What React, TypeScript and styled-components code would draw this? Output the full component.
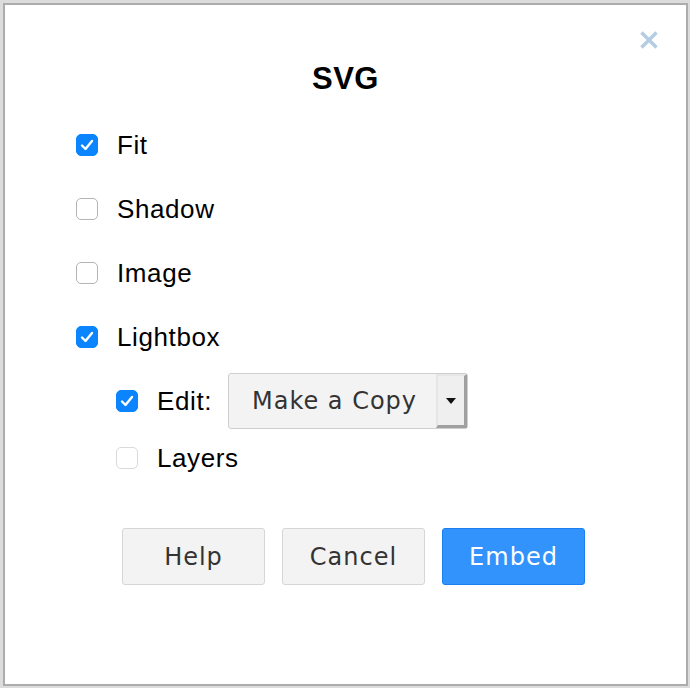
import React from "react";
import styled, { createGlobalStyle } from "styled-components";

const GlobalStyle = createGlobalStyle`
  html, body {
    margin: 0;
    padding: 0;
    background: #dcdcdc;
    font-family: "Liberation Sans", Arial, sans-serif;
  }
`;

const Dialog = styled.div`
  position: relative;
  box-sizing: border-box;
  margin: 3px 0 0 3px;
  width: 685px;
  height: 683px;
  background: #fff;
  border: 2px solid #acacac;
`;

const CloseButton = styled.button`
  position: absolute;
  top: 23px;
  right: 25px;
  width: 24px;
  height: 24px;
  padding: 0;
  border: none;
  background: transparent;
  cursor: pointer;
`;

const Title = styled.h2`
  margin: 0;
  padding-top: 55px;
  height: 38px;
  line-height: 38px;
  text-align: center;
  font-size: 31px;
  font-weight: bold;
  color: #000;
  letter-spacing: 0.5px;
`;

const Options = styled.div`
  display: flex;
  flex-direction: column;
  padding: 15px 0 0 71px;
`;

const Row = styled.label<{ $indent?: boolean; $height?: number }>`
  display: flex;
  align-items: center;
  height: ${(p) => p.$height ?? 64}px;
  margin-left: ${(p) => (p.$indent ? 40 : 0)}px;
  font-size: 26px;
  letter-spacing: 0.6px;
  color: #000;
  cursor: pointer;
`;

const Box = styled.span<{ $checked?: boolean; $disabled?: boolean }>`
  box-sizing: border-box;
  display: inline-flex;
  align-items: center;
  justify-content: center;
  width: 22px;
  height: 22px;
  margin-right: 19px;
  border-radius: 5px;
  background: ${(p) => (p.$checked ? "#0a84ff" : "#fff")};
  border: 1px solid
    ${(p) => (p.$checked ? "#0a84ff" : p.$disabled ? "#dadada" : "#b4b4b4")};
`;

const Select = styled.div`
  box-sizing: border-box;
  display: flex;
  align-items: stretch;
  width: 240px;
  height: 56px;
  margin-left: 16px;
  background: #f3f3f3;
  border: 1px solid #cfcfcf;
  border-radius: 3px;
  font-family: "DejaVu Sans", Verdana, sans-serif;
  font-size: 24px;
  letter-spacing: 1px;
  color: #333;
`;

const SelectValue = styled.span`
  flex: 1;
  display: flex;
  align-items: center;
  justify-content: center;
  padding-left: 4px;
`;

const SelectArrow = styled.span`
  box-sizing: border-box;
  width: 31px;
  display: flex;
  align-items: center;
  justify-content: center;
  background: #efefef;
  border-left: 2px solid #e6e6e6;
  border-top: 2px solid #e6e6e6;
  border-right: 3px solid #a0a0a0;
  border-bottom: 3px solid #a0a0a0;
  &::after {
    content: "";
    border-left: 5px solid transparent;
    border-right: 5px solid transparent;
    border-top: 6px solid #111;
  }
`;

const ButtonBar = styled.div`
  display: flex;
  gap: 17px;
  padding: 45px 0 0 117px;
`;

const Button = styled.button<{ $primary?: boolean }>`
  box-sizing: border-box;
  width: 143px;
  height: 57px;
  border-radius: 3px;
  border: 1px solid ${(p) => (p.$primary ? "#1c7ff0" : "#d6d6d6")};
  background: ${(p) => (p.$primary ? "#3193fb" : "#f3f3f3")};
  color: ${(p) => (p.$primary ? "#fff" : "#333")};
  font-family: "DejaVu Sans", Verdana, sans-serif;
  font-size: 24px;
  letter-spacing: 1px;
  cursor: pointer;
`;

const Check = () => (
  <svg width="14" height="12" viewBox="0 0 14 12">
    <path
      d="M2 6.5 L5.5 10 L12 2"
      fill="none"
      stroke="#fff"
      strokeWidth="2.4"
      strokeLinecap="round"
      strokeLinejoin="round"
    />
  </svg>
);

const CheckBox = ({ checked, disabled }: { checked?: boolean; disabled?: boolean }) => (
  <Box $checked={checked} $disabled={disabled}>
    {checked && <Check />}
  </Box>
);

export default function App() {
  return (
    <>
      <GlobalStyle />
      <Dialog>
        <CloseButton aria-label="Close">
          <svg width="24" height="24" viewBox="0 0 24 24">
            <path
              d="M4.5 4.5 L19.5 19.5 M19.5 4.5 L4.5 19.5"
              stroke="#b5cde4"
              strokeWidth="3.5"
              strokeLinecap="butt"
            />
          </svg>
        </CloseButton>
        <Title>SVG</Title>
        <Options>
          <Row>
            <CheckBox checked />
            Fit
          </Row>
          <Row>
            <CheckBox />
            Shadow
          </Row>
          <Row>
            <CheckBox />
            Image
          </Row>
          <Row>
            <CheckBox checked />
            Lightbox
          </Row>
          <Row $indent>
            <CheckBox checked />
            Edit:
            <Select>
              <SelectValue>Make a Copy</SelectValue>
              <SelectArrow />
            </Select>
          </Row>
          <Row $indent $height={50}>
            <CheckBox disabled />
            Layers
          </Row>
        </Options>
        <ButtonBar>
          <Button>Help</Button>
          <Button>Cancel</Button>
          <Button $primary>Embed</Button>
        </ButtonBar>
      </Dialog>
    </>
  );
}
